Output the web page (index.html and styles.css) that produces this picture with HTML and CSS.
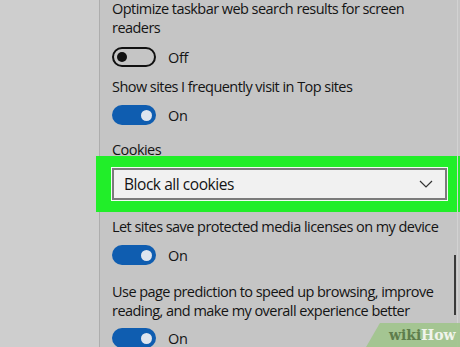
FILE: index.html
```html
<!DOCTYPE html>
<html>
<head>
<meta charset="utf-8">
<link rel="stylesheet" href="styles.css">
</head>
<body>
<div class="screen">
  <div class="side"></div>
  <div class="panel">
    <div class="setting s1">
      <p class="label">Optimize taskbar web search results for screen<br>readers</p>
      <div class="toggle-row">
        <span class="toggle off"><span class="knob"></span></span>
        <span class="state">Off</span>
      </div>
    </div>
    <div class="setting s2">
      <p class="label">Show sites I frequently visit in Top sites</p>
      <div class="toggle-row">
        <span class="toggle on"><span class="knob"></span></span>
        <span class="state">On</span>
      </div>
    </div>
    <div class="setting s3">
      <p class="label">Cookies</p>
      <div class="highlight">
        <div class="select">
          <span>Block all cookies</span>
          <svg class="chev" width="14" height="8" viewBox="0 0 14 8"><path d="M1 1 L7 7 L13 1" fill="none" stroke="#333" stroke-width="1.2"/></svg>
        </div>
      </div>
    </div>
    <div class="setting s4">
      <p class="label">Let sites save protected media licenses on my device</p>
      <div class="toggle-row">
        <span class="toggle on"><span class="knob"></span></span>
        <span class="state">On</span>
      </div>
    </div>
    <div class="setting s5">
      <p class="label">Use page prediction to speed up browsing, improve<br>reading, and make my overall experience better</p>
      <div class="toggle-row">
        <span class="toggle on"><span class="knob"></span></span>
        <span class="state">On</span>
      </div>
    </div>
    <div class="scroll-track"></div>
    <div class="scroll-thumb"></div>
  </div>
  <div class="wm"><span class="wiki">wiki</span><span class="how">How</span></div>
</div>
</body>
</html>
```
FILE: styles.css
```css
html, body {
  margin: 0;
  padding: 0;
}
body {
  width: 460px;
  height: 347px;
  overflow: hidden;
  background: #cdcdcd;
  font-family: "Open Sans", "Noto Sans", sans-serif;
  color: #141414;
}
.screen {
  position: relative;
  display: flex;
  width: 460px;
  height: 347px;
  overflow: hidden;
}
.side {
  width: 99px;
  flex: none;
  background: #cecece;
  border-right: 1px solid #adadad;
}
.panel {
  position: relative;
  flex: 1;
  min-width: 0;
  background: #c5c5c5;
  padding: 0 0 0 12px;
  font-size: 14.5px;
  letter-spacing: -0.55px;
  line-height: 19px;
}
.label {
  margin: 0;
  white-space: nowrap;
}
.s1 .label { margin-top: -1px; }
.toggle-row {
  display: flex;
  align-items: center;
  gap: 12px;
  height: 20px;
  margin-top: 10px;
}
.toggle {
  box-sizing: border-box;
  width: 44px;
  height: 20px;
  border-radius: 10px;
  display: flex;
  align-items: center;
}
.toggle.off {
  border: 2px solid #111;
  padding: 0 3px;
}
.toggle.on {
  background: #0f5db0;
  justify-content: flex-end;
  padding: 0 4px;
}
.knob {
  width: 10px;
  height: 10px;
  border-radius: 50%;
}
.on .knob {
  width: 11px;
  height: 11px;
  background: #dfe5ee;
}
.off .knob { background: #111; }
.state {
  font-size: 14.5px;
  letter-spacing: -0.3px;
}
.s2 { margin-top: 10px; }
.s2 .toggle-row { margin-top: 9px; }
.s3 { margin-top: 15px; }
.highlight {
  margin: -3px 0 0 -16px;
  background: #21ee29;
  padding: 12px 13px 12px 16px;
}
.select {
  box-sizing: border-box;
  width: 335px;
  height: 32px;
  background: #f1f1f1;
  border: 2px solid #7b7b7b;
  box-shadow: 0 0 0 1px #f4fbf4;
  display: flex;
  align-items: center;
  justify-content: space-between;
  padding: 0 10px 0 10px;
  font-size: 15.5px;
  letter-spacing: -0.45px;
}
.chev { margin-right: 2px; }
.s4 { margin-top: 5px; }
.s4 .toggle-row { margin-top: 9px; }
.s5 { margin-top: 17px; }
.s5 .toggle-row { margin-top: 8px; }
.scroll-track {
  position: absolute;
  top: 0;
  bottom: 0;
  right: 2px;
  width: 1px;
  background: #d2d2d2;
}
.scroll-thumb {
  position: absolute;
  top: 255px;
  height: 60px;
  right: 4px;
  width: 2px;
  background: #3a3a3a;
}
.wm {
  position: absolute;
  right: -8px;
  bottom: 0;
  padding: 3px 12px 3px 16px;
  line-height: 18px;
  background: rgba(160, 196, 140, 0.9);
  transform: skewX(-30deg);
  font-family: "DejaVu Serif", serif;
  font-weight: bold;
  font-size: 14px;
  letter-spacing: 0;
}
.wm span { display: inline-block; transform: skewX(30deg); }
.wiki { color: #5e7d4c; }
.how { color: #f0f4ec; }
```
